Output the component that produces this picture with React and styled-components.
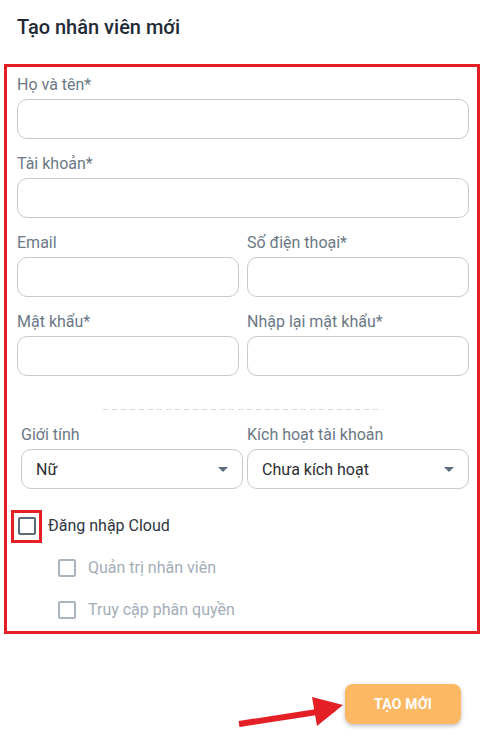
import React from "react";
import styled, { createGlobalStyle } from "styled-components";

const Global = createGlobalStyle`
  html, body { margin: 0; padding: 0; background: #fff; }
  body { font-family: Roboto, "Noto Sans", Arial, sans-serif; }
  * { box-sizing: border-box; }
`;

const Page = styled.div`
  padding: 0 9px 30px 4px;
`;

const Title = styled.h1`
  margin: 0 0 25px 13px;
  padding-top: 16px;
  font-size: 20px;
  line-height: 23px;
  font-weight: 500;
  color: #1f2a37;
`;

const FormBox = styled.div`
  border: 3px solid #e41f25;
  padding: 9px 8px 0 10px;
`;

const Fields = styled.div`
  display: grid;
  row-gap: 16px;
`;

const Row = styled.div`
  display: grid;
  grid-template-columns: 1fr 1fr;
  column-gap: ${(p) => p.$gap || 8}px;
  padding-left: ${(p) => p.$indent || 0}px;
`;

const Field = styled.label`
  display: flex;
  flex-direction: column;
  gap: 5px;
`;

const Label = styled.span`
  font-size: 16px;
  line-height: 18px;
  color: #6b7886;
`;

const Input = styled.input`
  height: 40px;
  width: 100%;
  border: 1px solid #c9c9c9;
  border-radius: 10px;
  background: #fff;
  font: inherit;
  padding: 0 14px;
  outline: none;
`;

const Select = styled.div`
  height: 40px;
  border: 1px solid #c9c9c9;
  border-radius: 10px;
  display: flex;
  align-items: center;
  justify-content: space-between;
  padding: 0 14px 0 14px;
  font-size: 16px;
  color: #2b2f33;
`;

const Divider = styled.div`
  width: 280px;
  height: 1px;
  margin: 33px auto 16px;
  background-image: linear-gradient(to right, #d9d9d9 0 5px, transparent 5px 9px);
  background-size: 9px 1px;
`;

const CheckList = styled.div`
  margin-top: 16px;
  display: flex;
  flex-direction: column;
`;

const CheckRow = styled.div`
  height: 42px;
  display: flex;
  align-items: center;
  gap: ${(p) => (p.$sub ? 12 : 6)}px;
  padding-left: ${(p) => (p.$sub ? 41 : 0)}px;
`;

const Highlight = styled.span`
  display: inline-flex;
  margin-left: -6px;
  border: 3px solid #e41f25;
  padding: 4px 3px 5px 4px;
`;

const Box = styled.span`
  width: 18px;
  height: 18px;
  border: 2px solid ${(p) => (p.$muted ? "#aab4bf" : "#5b6b7a")};
  border-radius: 2px;
  display: inline-block;
`;

const CheckText = styled.span`
  font-size: 16px;
  line-height: 18px;
  color: ${(p) => (p.$muted ? "#a3adb8" : "#2f3540")};
`;

const Footer = styled.div`
  display: flex;
  justify-content: flex-end;
  align-items: flex-start;
  margin-top: 50px;
  padding-right: 19px;
`;

const Arrow = styled.svg`
  margin-top: 11px;
  flex: none;
`;

const Button = styled.button`
  width: 116px;
  height: 40px;
  border: none;
  border-radius: 8px;
  background: #fdb863;
  color: #fff;
  font-family: Roboto, Arial, sans-serif;
  font-weight: 700;
  font-size: 14px;
  letter-spacing: 0.2px;
  box-shadow: 0 2px 4px rgba(0, 0, 0, 0.25);
  cursor: pointer;
`;

const Caret = () => (
  <svg width="10" height="5" viewBox="0 0 10 5">
    <path d="M0 0 L10 0 L5 5 Z" fill="#5f6e7c" />
  </svg>
);

const TextField = ({ label }) => (
  <Field>
    <Label>{label}</Label>
    <Input />
  </Field>
);

const SelectField = ({ label, value }) => (
  <Field as="div">
    <Label>{label}</Label>
    <Select>
      <span>{value}</span>
      <Caret />
    </Select>
  </Field>
);

export default function App() {
  return (
    <Page>
      <Global />
      <Title>Tạo nhân viên mới</Title>
      <FormBox>
        <Fields>
          <TextField label="Họ và tên*" />
          <TextField label="Tài khoản*" />
          <Row>
            <TextField label="Email" />
            <TextField label="Số điện thoại*" />
          </Row>
          <Row>
            <TextField label="Mật khẩu*" />
            <TextField label="Nhập lại mật khẩu*" />
          </Row>
        </Fields>
        <Divider />
        <Row $gap={4} $indent={4}>
          <SelectField label="Giới tính" value="Nữ" />
          <SelectField label="Kích hoạt tài khoản" value="Chưa kích hoạt" />
        </Row>
        <CheckList>
          <CheckRow>
            <Highlight>
              <Box />
            </Highlight>
            <CheckText>Đăng nhập Cloud</CheckText>
          </CheckRow>
          <CheckRow $sub>
            <Box $muted />
            <CheckText $muted>Quản trị nhân viên</CheckText>
          </CheckRow>
          <CheckRow $sub>
            <Box $muted />
            <CheckText $muted>Truy cập phân quyền</CheckText>
          </CheckRow>
        </CheckList>
      </FormBox>
      <Footer>
        <Arrow width="108" height="36" viewBox="0 0 108 36">
          <line x1="2" y1="29" x2="80" y2="17" stroke="#e41f25" strokeWidth="6" />
          <polygon points="106,10 75,2 80,31" fill="#e41f25" />
        </Arrow>
        <Button>TẠO MỚI</Button>
      </Footer>
    </Page>
  );
}
